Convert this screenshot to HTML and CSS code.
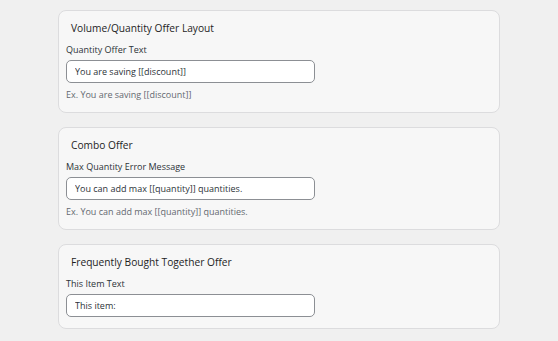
FILE: index.html
```html
<!DOCTYPE html>
<html lang="en">

<head>
    <meta charset="utf-8">
    <meta name="viewport" content="width=device-width, initial-scale=1.0">
    <title>Offer Settings</title>
    <link rel="stylesheet" href="styles.css">
</head>

<body>
    <main class="indstillinger">
        <section class="kort">
            <h2 class="titel">Volume/Quantity Offer Layout</h2>
            <label class="etiket" for="qty-text">Quantity Offer Text</label>
            <input class="felt" id="qty-text" type="text" value="You are saving [[discount]]">
            <p class="hint">Ex. You are saving [[discount]]</p>
        </section>

        <section class="kort">
            <h2 class="titel">Combo Offer</h2>
            <label class="etiket" for="combo-max">Max Quantity Error Message</label>
            <input class="felt" id="combo-max" type="text" value="You can add max [[quantity]] quantities.">
            <p class="hint">Ex. You can add max [[quantity]] quantities.</p>
        </section>

        <section class="kort">
            <h2 class="titel">Frequently Bought Together Offer</h2>
            <label class="etiket" for="fbt-item">This Item Text</label>
            <input class="felt" id="fbt-item" type="text" value="This item:">
        </section>
    </main>
</body>

</html>
```

FILE: styles.css
```css
body {
    margin: 0;
    background-color: #f0f0f0;
    font-family: "Open Sans", "Noto Sans", sans-serif;
    color: #1e1e1e;
}

.indstillinger {
    display: flex;
    flex-direction: column;
    gap: 14px;
    width: 442px;
    margin-left: 58px;
    padding-top: 10px;
}

.kort {
    display: flex;
    flex-direction: column;
    align-items: flex-start;
    box-sizing: border-box;
    background-color: #f7f7f7;
    border: 1px solid #dcdcde;
    border-radius: 8px;
    padding: 9px 7px 11px 7px;
}

.titel {
    margin: 0 0 7px 5px;
    font-size: 10.2px;
    font-weight: 500;
    line-height: 16px;
    color: #1e1e1e;
}

.etiket {
    font-size: 9px;
    line-height: 14px;
    color: #2c3338;
    margin-bottom: 3px;
}

.felt {
    box-sizing: border-box;
    width: 249px;
    height: 23px;
    margin: 0;
    padding: 0 8px;
    border: 1px solid #8c8f94;
    border-radius: 5px;
    background-color: #fff;
    font-family: inherit;
    font-size: 9px;
    color: #2c3338;
}

.hint {
    margin: 6px 0 0 0;
    font-size: 9px;
    line-height: 12px;
    color: #646970;
}
```
